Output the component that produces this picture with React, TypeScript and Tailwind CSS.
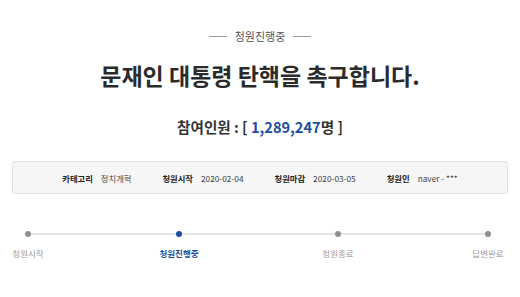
import React from 'react';

const FONT = "font-['Noto_Sans_CJK_KR','Noto_Sans',sans-serif]";

interface InfoItem {
  label: string;
  value: string;
}

const INFO: InfoItem[] = [
  { label: '카테고리', value: '정치개혁' },
  { label: '청원시작', value: '2020-02-04' },
  { label: '청원마감', value: '2020-03-05' },
  { label: '청원인', value: 'naver - ***' },
];

interface Step {
  label: string;
  active?: boolean;
  ml: string;
}

const STEPS: Step[] = [
  { label: '청원시작', ml: 'ml-[4px]' },
  { label: '청원진행중', active: true, ml: 'ml-[103px]' },
  { label: '청원종료', ml: 'ml-[111px]' },
  { label: '답변완료', ml: 'ml-[102px]' },
];

export default function App() {
  return (
    <div className={`w-[520px] h-[297px] bg-white overflow-hidden ${FONT}`}>
      {/* Status */}
      <div className="pt-[28px] flex items-center justify-center gap-[8px] h-[44px] leading-[16px]">
        <span className="w-[18px] h-px bg-[#9a9a9a]" />
        <span className="text-[11px] text-[#555]">청원진행중</span>
        <span className="w-[18px] h-px bg-[#9a9a9a]" />
      </div>

      {/* Title */}
      <h1 className="mt-[16px] text-center text-[23px] leading-[30px] font-bold text-[#2b2b2b]">
        문재인 대통령 탄핵을 촉구합니다.
      </h1>

      {/* Count */}
      <p className="mt-[27px] text-center text-[14.6px] leading-[20px] font-bold text-[#333]">
        참여인원 : [ <span className="text-[#1c4f9e]">1,289,247</span>명 ]
      </p>

      {/* Info box */}
      <div className="mt-[24px] mx-[12px] h-[33px] rounded-[3px] border border-[#e2e2e2] bg-[#f6f6f6] flex items-center justify-center gap-[31px]">
        {INFO.map((item) => (
          <div key={item.label} className="flex items-center gap-[8px] text-[8.3px] leading-[12px]">
            <span className="font-bold text-[#222]">{item.label}</span>
            <span className="text-[#444]">{item.value}</span>
          </div>
        ))}
      </div>

      {/* Progress */}
      <div className="relative mt-[37px] flex">
        <div className="absolute top-[2px] left-[28px] w-[460px] h-[2px] bg-[#e6e6e6]" />
        {STEPS.map((step) => (
          <div key={step.label} className={`relative w-[48px] flex flex-col items-center ${step.ml}`}>
            <span className={`w-[6px] h-[6px] rounded-full ${step.active ? 'bg-[#1c4f9e]' : 'bg-[#8f8f8f]'}`} />
            <span
              className={`mt-[10px] whitespace-nowrap text-[8.5px] leading-[12px] ${
                step.active ? 'font-bold text-[#1c4f9e]' : 'text-[#9a9a9a]'
              }`}
            >
              {step.label}
            </span>
          </div>
        ))}
      </div>
    </div>
  );
}
